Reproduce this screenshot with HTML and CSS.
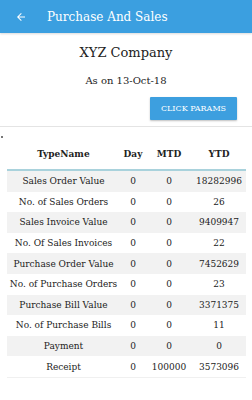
FILE: index.html
```html
<!DOCTYPE html>
<html>
<head>
    <meta charset="UTF-8">
    <title>Purchase And Sales</title>
    <link rel="stylesheet" href="styles.css">
</head>
<body>
    <div class="app-bar">
        <svg class="back" width="12" height="12" viewBox="0 0 24 24">
            <path d="M20 11H7.83l5.59-5.59L12 4l-8 8 8 8 1.41-1.41L7.83 13H20v-2z" fill="#fff"/>
        </svg>
        <div class="app-title">Purchase And Sales</div>
    </div>

    <div class="company">XYZ Company</div>
    <div class="as-on">As on 13-Oct-18</div>

    <div class="actions">
        <button class="params-btn">CLICK PARAMS</button>
    </div>

    <div class="dot-row"><span class="dot"></span></div>

    <table class="report">
        <colgroup>
            <col class="c-name">
            <col class="c-day">
            <col class="c-mtd">
            <col class="c-ytd">
        </colgroup>
        <thead>
            <tr><th>TypeName</th><th>Day</th><th>MTD</th><th>YTD</th></tr>
        </thead>
        <tbody>
            <tr><td>Sales Order Value</td><td>0</td><td>0</td><td>18282996</td></tr>
            <tr><td>No. of Sales Orders</td><td>0</td><td>0</td><td>26</td></tr>
            <tr><td>Sales Invoice Value</td><td>0</td><td>0</td><td>9409947</td></tr>
            <tr><td>No. Of Sales Invoices</td><td>0</td><td>0</td><td>22</td></tr>
            <tr><td>Purchase Order Value</td><td>0</td><td>0</td><td>7452629</td></tr>
            <tr><td>No. of Purchase Orders</td><td>0</td><td>0</td><td>23</td></tr>
            <tr><td>Purchase Bill Value</td><td>0</td><td>0</td><td>3371375</td></tr>
            <tr><td>No. of Purchase Bills</td><td>0</td><td>0</td><td>11</td></tr>
            <tr><td>Payment</td><td>0</td><td>0</td><td>0</td></tr>
            <tr><td>Receipt</td><td>0</td><td>100000</td><td>3573096</td></tr>
        </tbody>
    </table>
</body>
</html>
```

FILE: styles.css
```css
body {
    margin: 0;
    padding: 0;
    font-family: 'DejaVu Serif', 'Liberation Serif', serif;
    color: #222;
    background: #fff;
}

.app-bar {
    height: 33px;
    background: #3b9fe0;
    display: flex;
    align-items: center;
    padding-left: 15px;
    box-shadow: 0 1px 2px rgba(0, 0, 0, 0.15);
}

.back {
    margin-right: 20px;
}

.app-title {
    color: #fff;
    font-family: 'DejaVu Serif', serif;
    font-size: 12px;
}

.company {
    text-align: center;
    font-size: 13px;
    margin-top: 12px;
    line-height: 16px;
}

.as-on {
    text-align: center;
    font-size: 10px;
    margin-top: 14px;
    line-height: 12px;
}

.actions {
    display: flex;
    justify-content: flex-end;
    padding: 10px 15px 6px 0;
    border-bottom: 1px solid #e4e4e4;
}

.params-btn {
    width: 87px;
    height: 23px;
    background: #3d9fdf;
    color: #fff;
    border: none;
    border-radius: 1px;
    font-family: 'DejaVu Serif', serif;
    font-size: 8px;
    padding: 0;
    box-shadow: 0 1px 2px rgba(0, 0, 0, 0.25);
}

.dot-row {
    height: 12px;
    position: relative;
}

.dot {
    position: absolute;
    left: 1px;
    top: 9px;
    width: 2px;
    height: 2px;
    background: #777;
}

.report {
    width: 239px;
    margin-left: 7px;
    border-collapse: collapse;
    table-layout: fixed;
    font-size: 9px;
    text-align: center;
}

.c-name { width: 113px; }
.c-day { width: 26px; }
.c-mtd { width: 46px; }
.c-ytd { width: 54px; }

.report th {
    font-weight: bold;
    height: 30px;
    padding: 0;
    border-bottom: 2px solid #a9d2dc;
}

.report td {
    height: 20.6px;
    padding: 0;
    white-space: nowrap;
}

.report tbody tr:nth-child(odd) {
    background: #f2f2f2;
}

.report tbody tr:last-child {
    border-bottom: 1px solid #f0f0f0;
}
```
